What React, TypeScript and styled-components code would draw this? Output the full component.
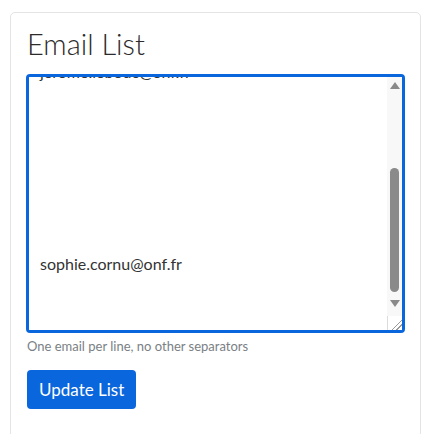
import React, { useEffect, useRef } from "react";
import styled, { createGlobalStyle } from "styled-components";

const GlobalStyle = createGlobalStyle`
  body {
    margin: 0;
    background: #ffffff;
    font-family: Lato, "Noto Sans", sans-serif;
    color: #333333;
  }
`;

const Page = styled.div`
  padding: 12px 4px 0 10px;
  height: 434px;
  box-sizing: border-box;
  overflow: hidden;
`;

const Card = styled.div`
  border: 1px solid #e4e4e4;
  border-radius: 5px;
  padding: 14px 15px 0 15px;
  min-height: 460px;
  box-sizing: border-box;
`;

const Title = styled.h2`
  margin: 0 0 13px 1px;
  font-family: Lato, sans-serif;
  font-weight: 300;
  font-size: 29px;
  line-height: 34px;
  color: #2b2b2b;
`;

const Field = styled.div`
  position: relative;
`;

const ListArea = styled.textarea`
  display: block;
  width: 100%;
  height: 259px;
  box-sizing: border-box;
  border: 3px solid #0a66dc;
  border-radius: 4px;
  padding: 6px 26px 6px 11px;
  font-family: Lato, sans-serif;
  font-size: 16px;
  line-height: 24px;
  color: #333333;
  outline: none;
  resize: vertical;

  &::-webkit-resizer {
    background: linear-gradient(135deg, transparent 62%, #9a9a9a 62% 67%, transparent 67% 78%, #9a9a9a 78% 83%, transparent 83%), #ffffff;
    border-left: 1px solid #dcdcdc;
    border-top: 1px solid #dcdcdc;
  }
`;

/* drawn scrollbar, laid over the textarea's right edge */
const ScrollBar = styled.div`
  position: absolute;
  top: 3px;
  right: 3px;
  width: 15px;
  height: 239px;
  padding-bottom: 4px;
  box-sizing: border-box;
  background: #f8f8f8;
  display: flex;
  flex-direction: column;
  pointer-events: none;
`;

const Arrow = styled.div<{ $down?: boolean }>`
  height: 15px;
  flex: none;
  display: flex;
  justify-content: center;
  align-items: center;
  &::after {
    content: "";
    width: 0;
    height: 0;
    border-left: 5px solid transparent;
    border-right: 5px solid transparent;
    ${(p) =>
      p.$down
        ? "border-top: 7px solid #8a8a8a; margin-top: -2px;"
        : "border-bottom: 7px solid #8a8a8a; margin-top: 2px;"}
  }
`;

const Track = styled.div`
  flex: 1;
`;

const Thumb = styled.div`
  margin: 76px 0 0 3px;
  width: 9px;
  height: 124px;
  border-radius: 5px;
  background: #8a8a8a;
`;

const Help = styled.div`
  margin: 4px 0 0 1px;
  font-size: 13px;
  line-height: 18px;
  color: #7a7f85;
`;

const Button = styled.button`
  margin: 15px 0 0 1px;
  background: #0a66dc;
  color: #ffffff;
  border: none;
  border-radius: 4px;
  padding: 0 12px;
  height: 39px;
  font-family: Lato, sans-serif;
  font-size: 17px;
`;

const emails = [
  "anne.martin@onf.fr",
  "bruno.petit@onf.fr",
  "claire.durand@onf.fr",
  "david.moreau@onf.fr",
  "emma.lefevre@onf.fr",
  "francois.roux@onf.fr",
  "jerome.lebouc@onf.fr",
  "",
  "",
  "",
  "",
  "",
  "",
  "",
  "sophie.cornu@onf.fr",
  "",
  "",
];

export default function App() {
  const ref = useRef<HTMLTextAreaElement>(null);
  useEffect(() => {
    if (ref.current) ref.current.scrollTop = 10000;
  }, []);
  return (
    <>
      <GlobalStyle />
      <Page>
        <Card>
          <Title>Email List</Title>
          <Field>
            <ListArea ref={ref} defaultValue={emails.join("\n")} />
            <ScrollBar>
              <Arrow />
              <Track>
                <Thumb />
              </Track>
              <Arrow $down />
            </ScrollBar>
          </Field>
          <Help>One email per line, no other separators</Help>
          <Button>Update List</Button>
        </Card>
      </Page>
    </>
  );
}
